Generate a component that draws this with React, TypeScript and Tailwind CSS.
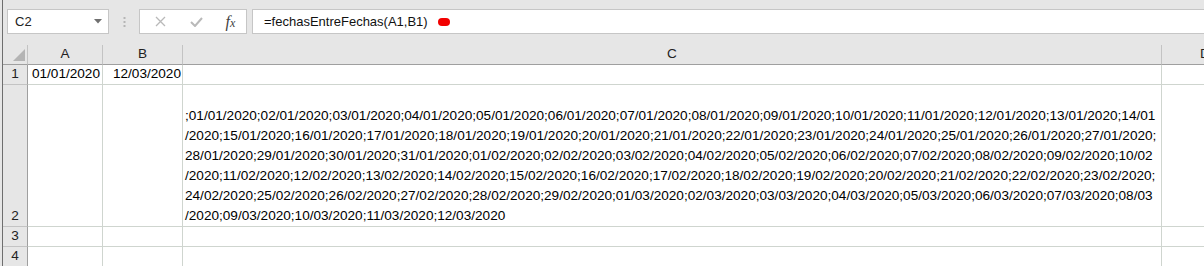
export default function App() {
  const lines = [
    ";01/01/2020;02/01/2020;03/01/2020;04/01/2020;05/01/2020;06/01/2020;07/01/2020;08/01/2020;09/01/2020;10/01/2020;11/01/2020;12/01/2020;13/01/2020;14/01",
    "/2020;15/01/2020;16/01/2020;17/01/2020;18/01/2020;19/01/2020;20/01/2020;21/01/2020;22/01/2020;23/01/2020;24/01/2020;25/01/2020;26/01/2020;27/01/2020;",
    "28/01/2020;29/01/2020;30/01/2020;31/01/2020;01/02/2020;02/02/2020;03/02/2020;04/02/2020;05/02/2020;06/02/2020;07/02/2020;08/02/2020;09/02/2020;10/02",
    "/2020;11/02/2020;12/02/2020;13/02/2020;14/02/2020;15/02/2020;16/02/2020;17/02/2020;18/02/2020;19/02/2020;20/02/2020;21/02/2020;22/02/2020;23/02/2020;",
    "24/02/2020;25/02/2020;26/02/2020;27/02/2020;28/02/2020;29/02/2020;01/03/2020;02/03/2020;03/03/2020;04/03/2020;05/03/2020;06/03/2020;07/03/2020;08/03",
    "/2020;09/03/2020;10/03/2020;11/03/2020;12/03/2020",
  ];

  const font = "font-['Liberation_Sans',Arial,sans-serif]";
  const hdr = "bg-[#e6e6e6] border-r border-b border-r-[#c3c3c3] border-b-[#9f9f9f] text-[#222] flex items-center justify-center";
  const rowHdr = "bg-[#e6e6e6] border-r border-b border-r-[#9f9f9f] border-b-[#c3c3c3] text-[#222] flex items-end justify-center leading-[20px]";
  const cell = "bg-white border-r border-b border-[#cfd5cf]";

  return (
    <div className={`w-[1204px] h-[266px] overflow-hidden bg-[#e6e6e6] flex ${font} text-[13.6px] text-black`}>
      {/* left edge */}
      <div className="w-[2px] shrink-0 bg-[#e6e6e6]" />
      <div className="w-px shrink-0 bg-[#6e6e6e]" />

      <div className="flex-1 flex flex-col min-w-0">
        {/* TOOLBAR */}
        <div className="h-[45px] shrink-0 flex items-start pt-[9px]">
          {/* name box */}
          <div className="ml-[4px] w-[102px] h-[25px] bg-white border border-[#c6c6c6] flex items-center pl-[7px] pr-[6px]">
            <span className="flex-1 text-[13px] text-[#222]">C2</span>
            <svg width="8" height="5" viewBox="0 0 8 5">
              <path d="M0 0 L8 0 L4 4.5 Z" fill="#707070" />
            </svg>
          </div>

          {/* grip dots */}
          <div className="w-[30px] h-[25px] flex items-center justify-center">
            <svg width="3" height="10" viewBox="0 0 3 10">
              <rect x="0.5" y="0" width="2" height="2" fill="#b5b5b5" />
              <rect x="0.5" y="4" width="2" height="2" fill="#b5b5b5" />
              <rect x="0.5" y="8" width="2" height="2" fill="#b5b5b5" />
            </svg>
          </div>

          {/* cancel / enter / fx */}
          <div className="w-[108px] h-[25px] bg-white border border-[#c6c6c6] flex items-center">
            <div className="w-[37px] flex justify-center pl-[3px]">
              <svg width="11" height="11" viewBox="0 0 11 11">
                <path d="M1 1 L10 10 M10 1 L1 10" stroke="#b9b9b9" strokeWidth="1.3" />
              </svg>
            </div>
            <div className="w-[38px] flex justify-center">
              <svg width="13" height="10" viewBox="0 0 13 10">
                <path d="M1 5 L5 9 L12 1" stroke="#b9b9b9" strokeWidth="2" fill="none" />
              </svg>
            </div>
            <div className="flex-1 flex justify-center">
              <span className="font-['Liberation_Serif',serif] italic text-[16px] text-[#3f3f3f] leading-none">
                f<span className="text-[12px]">x</span>
              </span>
            </div>
          </div>

          {/* formula bar */}
          <div className="ml-[5px] flex-1 -mr-[2px] h-[25px] bg-white border border-[#c6c6c6] flex items-center pl-[11px]">
            <span className="text-[13px] text-[#111]">=fechasEntreFechas(A1,B1)</span>
            <span className="ml-[10px] mt-[1px] inline-block w-[12px] h-[8px] rounded-full bg-[#f20000]" />
          </div>
        </div>

        {/* GRID */}
        <div className="flex-1 grid grid-cols-[25px_75px_80px_979px_1fr] grid-rows-[20px_20px_142px_20px_20px]">
          {/* header row */}
          <div className={`${hdr} border-r-[#9f9f9f] items-end justify-end pr-[2px] pb-[3px]`}>
            <svg width="12" height="12" viewBox="0 0 12 12">
              <path d="M12 0 L12 12 L0 12 Z" fill="#b4b4b4" />
            </svg>
          </div>
          <div className={hdr}>A</div>
          <div className={hdr}>B</div>
          <div className={hdr}>C</div>
          <div className={`${hdr} justify-start pl-[38px]`}>
            <span>D</span>
          </div>

          {/* row 1 */}
          <div className={rowHdr}>1</div>
          <div className={`${cell} flex items-end justify-end pr-[2px] leading-[20px]`}>01/01/2020</div>
          <div className={`${cell} flex items-end justify-end pr-[1px] leading-[20px]`}>12/03/2020</div>
          <div className={cell} />
          <div className={cell} />

          {/* row 2 */}
          <div className={rowHdr}>2</div>
          <div className={cell} />
          <div className={cell} />
          <div className={`${cell} flex flex-col justify-end pl-[2px] leading-[20px] whitespace-pre`}>
            {lines.map((l, i) => (
              <div key={i}>{l}</div>
            ))}
          </div>
          <div className={cell} />

          {/* row 3 */}
          <div className={rowHdr}>3</div>
          <div className={cell} />
          <div className={cell} />
          <div className={cell} />
          <div className={cell} />

          {/* row 4 */}
          <div className={rowHdr}>4</div>
          <div className={cell} />
          <div className={cell} />
          <div className={cell} />
          <div className={cell} />
        </div>
      </div>
    </div>
  );
}
